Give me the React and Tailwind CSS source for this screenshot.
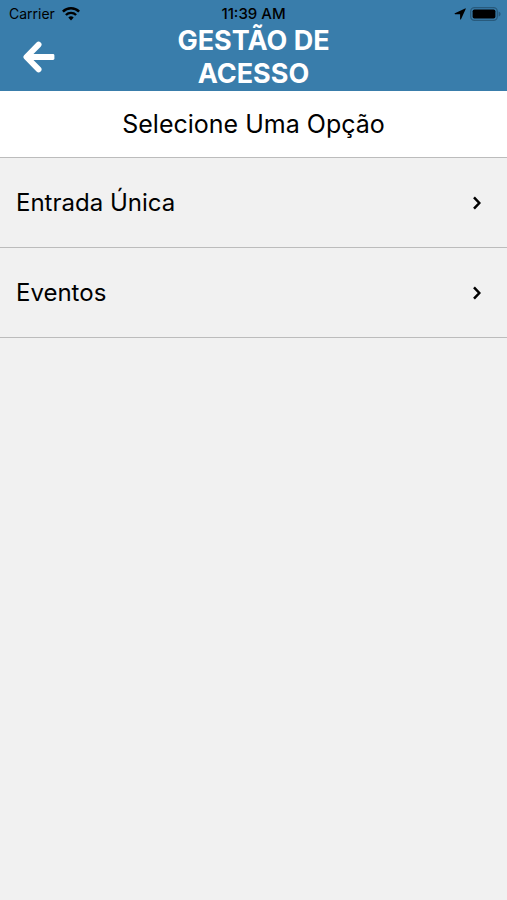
import React, { useCallback } from "react";

const OPTIONS = [
  { id: "single", label: "Entrada Única" },
  { id: "events", label: "Eventos" },
];

const WifiIcon = () => (
  <svg width="18" height="14" viewBox="0 0 18 14" fill="none" stroke="currentColor" aria-hidden="true">
    <path d="M.9 4.6a11.5 11.5 0 0 1 16.2 0" strokeWidth="2.5" />
    <path d="M3.9 8a7.2 7.2 0 0 1 10.2 0" strokeWidth="2.4" />
    <path d="M9 13.4 6.3 10.6a3.9 3.9 0 0 1 5.4 0z" fill="currentColor" stroke="none" />
  </svg>
);

const LocationIcon = () => (
  <svg width="12" height="12" viewBox="0 0 12 12" fill="currentColor" aria-hidden="true">
    <path d="M11.1.4a.5.5 0 0 1 .6.7L7 11.2c-.2.5-.9.4-.9-.2V6.2H1.1c-.6 0-.7-.8-.2-1z" />
  </svg>
);

const BatteryIcon = () => (
  <svg width="31" height="14" viewBox="0 0 31 14" aria-hidden="true">
    <rect x="0.7" y="0.7" width="26.6" height="12.6" rx="3.8" fill="none" stroke="#285a7c" strokeWidth="1.3" />
    <rect x="2.6" y="2.5" width="22.8" height="9" rx="1.8" fill="#000" />
    <path d="M28.6 4.4c1.2.4 2 1.4 2 2.6s-.8 2.2-2 2.6z" fill="#285a7c" />
  </svg>
);

const BackIcon = () => (
  <svg width="32" height="32" viewBox="0 0 32 32" fill="none" stroke="#fff" strokeLinejoin="round" aria-hidden="true">
    <path d="M15.6 3.6 3.4 16l12.2 12.4" strokeWidth="5.8" strokeLinecap="round" />
    <path d="M5 16h24" strokeWidth="6" />
    <rect x="27" y="13" width="4.4" height="6" rx="1.4" fill="#fff" stroke="none" />
  </svg>
);

const ChevronIcon = () => (
  <svg width="8" height="14" viewBox="0 0 8 14" fill="none" stroke="currentColor" strokeWidth="2.5" aria-hidden="true">
    <path d="M1 1.4 6.3 7 1 12.6" />
  </svg>
);

const StatusBar = () => (
  <div className="grid h-6 grid-cols-3 items-center pt-1 text-black">
    <div className="flex items-center gap-[7px] pl-[9px] text-sm leading-5">
      <span>Carrier</span>
      <WifiIcon />
    </div>
    <span className="text-center text-[15px] leading-5 font-medium">11:39 AM</span>
    <div className="flex items-center justify-end gap-1 pr-1.5">
      <LocationIcon />
      <BatteryIcon />
    </div>
  </div>
);

const App = () => {

  const handleSelect = useCallback((id) => {
    console.log("Selected option", id);
  }, [])

  return (
    <div className="flex min-h-screen flex-col bg-[#f1f1f1] font-['Inter',sans-serif] text-black">
      <header className="bg-[#397dab]">
        <StatusBar />
        <div className="grid grid-cols-3 items-center pb-px">
          <button type="button" aria-label="Voltar" className="justify-self-start pl-[23px]">
            <BackIcon />
          </button>
          <h1 className="text-center text-[27px] leading-[33px] font-bold text-white">
            GESTÃO DE ACESSO
          </h1>
        </div>
      </header>
      <main>
        <h2 className="border-b border-[#bcbcbc] bg-white py-4 text-center text-[25px] leading-[34px]">
          Selecione Uma Opção
        </h2>
        <ul>
          {OPTIONS.map((option) => (
            <li key={option.id} className="border-b border-[#bcbcbc]">
              <button
                type="button"
                className="flex w-full items-center justify-between py-7 pr-[26px] pl-4 text-left text-2xl leading-[33px]"
                onClick={() => handleSelect(option.id)}
              >
                {option.label}
                <ChevronIcon />
              </button>
            </li>
          ))}
        </ul>
      </main>
    </div>
  )
}

export default App
